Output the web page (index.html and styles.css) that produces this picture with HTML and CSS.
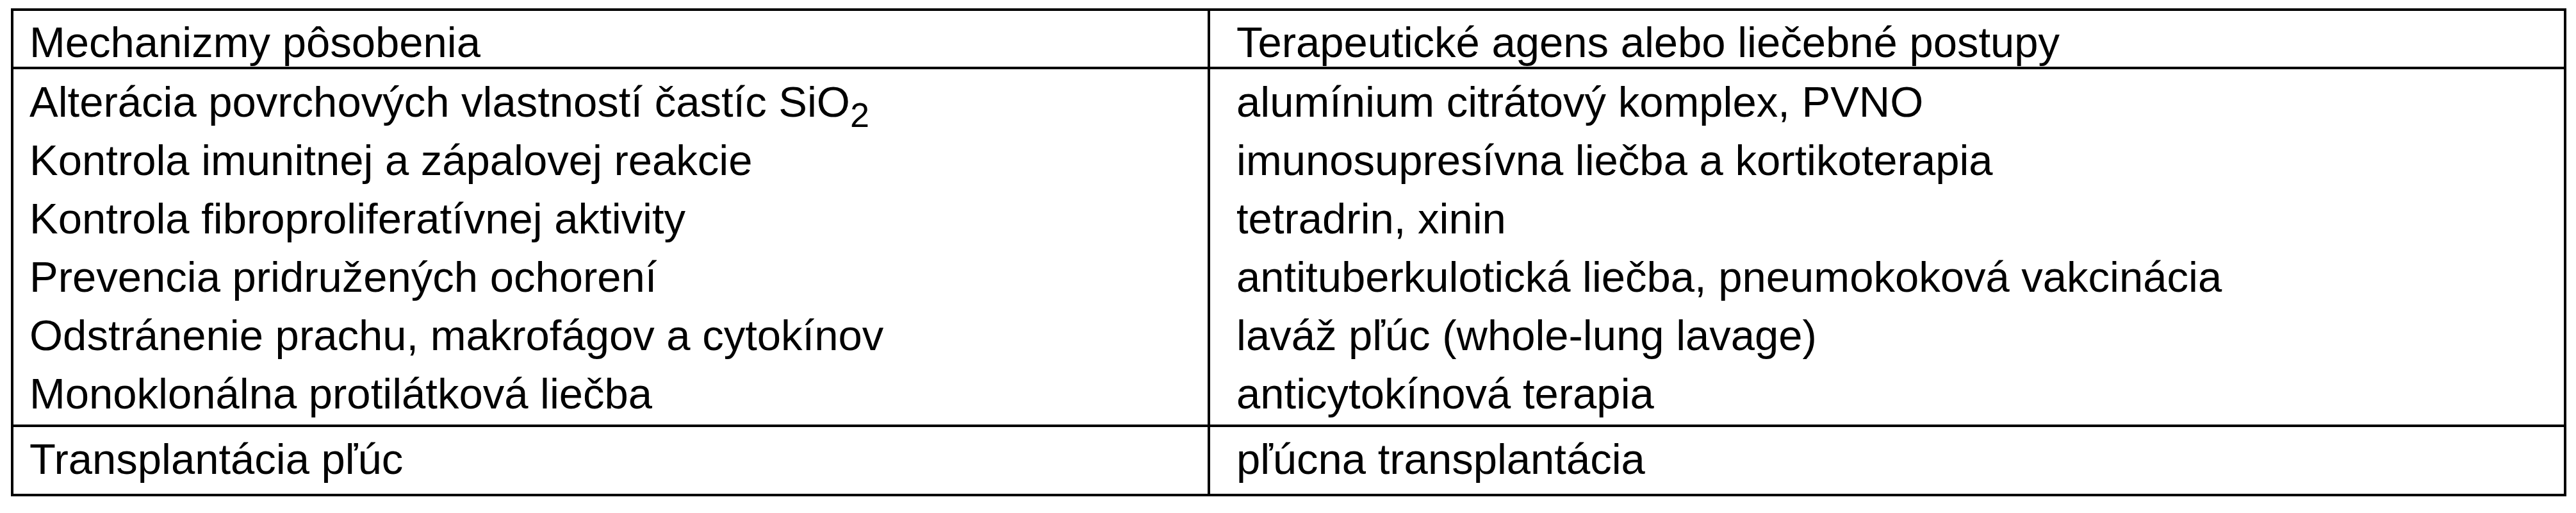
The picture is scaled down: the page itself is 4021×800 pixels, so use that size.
FILE: index.html
```html
<!DOCTYPE html>
<html lang="sk">
<head>
<meta charset="utf-8">
<title>Mechanizmy pôsobenia</title>
<link rel="stylesheet" href="styles.css">
</head>
<body>
<table class="mech">
  <colgroup><col class="c1"><col class="c2"></colgroup>
  <thead>
    <tr class="head"><th class="left">Mechanizmy pôsobenia</th><th class="right">Terapeutické agens alebo liečebné postupy</th></tr>
  </thead>
  <tbody>
    <tr class="first"><td class="left">Alterácia povrchových vlastností častíc SiO<sub>2</sub></td><td class="right">alumínium citrátový komplex, PVNO</td></tr>
    <tr><td class="left">Kontrola imunitnej a zápalovej reakcie</td><td class="right">imunosupresívna liečba a kortikoterapia</td></tr>
    <tr><td class="left">Kontrola fibroproliferatívnej aktivity</td><td class="right">tetradrin, xinin</td></tr>
    <tr><td class="left">Prevencia pridružených ochorení</td><td class="right">antituberkulotická liečba, pneumokoková vakcinácia</td></tr>
    <tr><td class="left">Odstránenie prachu, makrofágov a cytokínov</td><td class="right">laváž pľúc (whole-lung lavage)</td></tr>
    <tr class="last"><td class="left">Monoklonálna protilátková liečba</td><td class="right">anticytokínová terapia</td></tr>
  </tbody>
  <tbody>
    <tr class="solo"><td class="left">Transplantácia pľúc</td><td class="right">pľúcna transplantácia</td></tr>
  </tbody>
</table>
</body>
</html>
```
FILE: styles.css
```css
html, body {
  margin: 0;
  padding: 0;
  background: #ffffff;
}

body {
  font-family: "Liberation Sans", Arial, Helvetica, sans-serif;
  font-size: 67px;
  color: #000000;
}

.mech {
  margin: 13px 0 0 17px;
  width: 3989px;
  border: 4px solid #000000;
  border-collapse: separate;
  border-spacing: 0;
  table-layout: fixed;
}

.mech col.c1 { width: 1868px; }
.mech col.c2 { width: 2113px; }

.mech th,
.mech td {
  font-weight: normal;
  text-align: left;
  vertical-align: top;
  white-space: nowrap;
  padding: 0;
  line-height: 91px;
}

.mech .left {
  padding-left: 25px;
  border-right: 4px solid #000000;
}

.mech .right {
  padding-left: 41px;
}

.mech .head th {
  line-height: 74px;
  padding-top: 12px;
  padding-bottom: 1px;
  border-bottom: 4px solid #000000;
}

.mech .first td {
  padding-top: 5px;
}

.mech .last td {
  padding-bottom: 3px;
  border-bottom: 4px solid #000000;
}

.mech .solo td {
  line-height: 74px;
  padding-top: 13px;
  padding-bottom: 17px;
}

.mech sub {
  font-size: 54px;
  line-height: 0;
  vertical-align: -16px;
}
```
